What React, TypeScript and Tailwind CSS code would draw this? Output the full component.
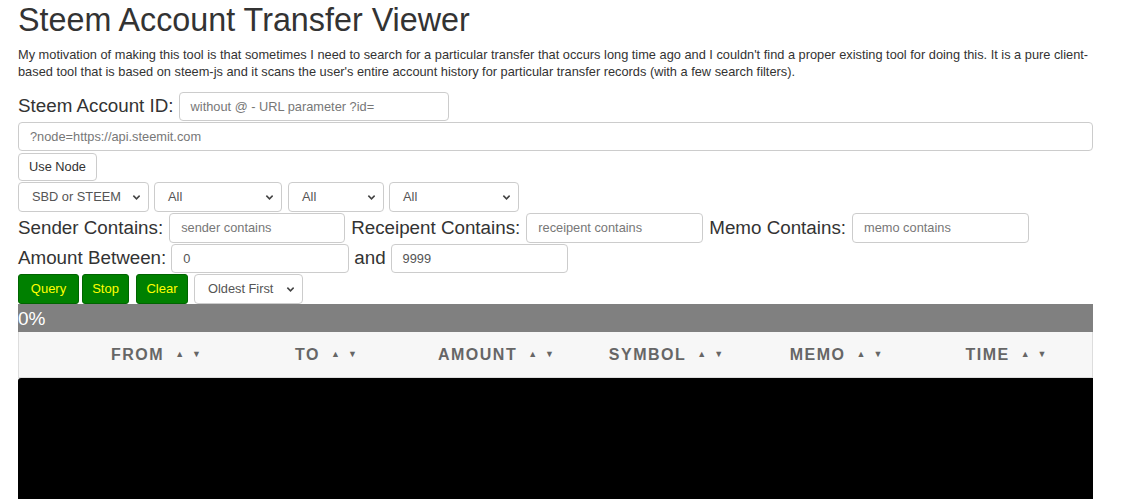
import React from "react";

const columns = ["From", "To", "Amount", "Symbol", "Memo", "Time"];

function Chevron() {
  return (
    <svg
      className="pointer-events-none absolute right-[8px] top-1/2 -translate-y-1/2 w-[9px] h-[9px] text-[#444]"
      viewBox="0 0 10 10"
      fill="none"
      stroke="currentColor"
      strokeWidth={1.7}
    >
      <path d="M1.5 3.5 5 7l3.5-3.5" />
    </svg>
  );
}

function Select({ width, value, className = "" }: { width: string; value: string; className?: string }) {
  return (
    <div className={`relative ${width} h-[30px] ${className}`}>
      <div className="h-full w-full rounded-[4px] border border-[#ccc] bg-white pl-[13px] flex items-center text-[12.8px] text-[#555]">
        {value}
      </div>
      <Chevron />
    </div>
  );
}

function Field({ width, text, placeholder = true, height = "h-[29px]" }: { width: string; text: string; placeholder?: boolean; height?: string }) {
  return (
    <div
      className={`${width} ${height} rounded-[4px] border border-[#ccc] bg-white px-[11px] flex items-center text-[12.8px] ${
        placeholder ? "text-[#777]" : "text-[#555]"
      }`}
    >
      {text}
    </div>
  );
}

function GreenButton({ label, width, className = "" }: { label: string; width: string; className?: string }) {
  return (
    <button className={`${width} ${className} h-[30px] rounded-[3px] border border-[#006400] bg-[#008000] text-[13px] font-normal text-[#ffff00]`}>
      {label}
    </button>
  );
}

export default function App() {
  return (
    <div className="bg-white min-h-[499px] overflow-hidden font-['Liberation_Sans',Arial,sans-serif] text-[#333]">
      <div className="ml-[18px] w-[1075px]">
        {/* Title */}
        <h1 className="pt-[3px] text-[32.3px] leading-[35px] font-normal text-[#333]">
          Steem Account Transfer Viewer
        </h1>
        <p className="mt-[8px] text-[12.8px] leading-[17px] text-[#333]">
          My motivation of making this tool is that sometimes I need to search for a particular transfer that occurs long time ago and I couldn't find a proper existing tool for doing this. It is a pure client-based tool that is based on steem-js and it scans the user's entire account history for particular transfer records (with a few search filters).
        </p>

        {/* Account */}
        <div className="mt-[12px] flex items-center gap-[5px] h-[29px]">
          <span className="text-[18.8px]">Steem Account ID:</span>
          <Field width="w-[270px]" text="without @ - URL parameter ?id=" />
        </div>
        <div className="mt-[1px]">
          <Field width="w-full" text="?node=https://api.steemit.com" />
        </div>
        <div className="mt-[2px]">
          <button className="h-[28px] w-[79px] rounded-[4px] border border-[#ccc] bg-white text-[12.8px] text-[#333]">
            Use Node
          </button>
        </div>

        {/* Filters */}
        <div className="mt-[1px] flex">
          <Select width="w-[131px]" value="SBD or STEEM" />
          <Select width="w-[128px]" className="ml-[5px]" value="All" />
          <Select width="w-[96px]" className="ml-[6px]" value="All" />
          <Select width="w-[130px]" className="ml-[5px]" value="All" />
        </div>

        <div className="mt-[1px] flex items-center gap-[6px] h-[30px] text-[18.8px]">
          <span>Sender Contains:</span>
          <Field width="w-[176px]" height="h-[30px]" text="sender contains" />
          <span>Receipent Contains:</span>
          <Field width="w-[177px]" height="h-[30px]" text="receipent contains" />
          <span>Memo Contains:</span>
          <Field width="w-[177px]" height="h-[30px]" text="memo contains" />
        </div>

        <div className="mt-[1px] flex items-center gap-[5px] h-[29px] text-[18.8px]">
          <span>Amount Between:</span>
          <Field width="w-[178px]" text="0" placeholder={false} />
          <span>and</span>
          <Field width="w-[177px]" text="9999" placeholder={false} />
        </div>

        <div className="mt-[1px] flex items-center">
          <GreenButton label="Query" width="w-[61px]" />
          <GreenButton label="Stop" width="w-[47px]" className="ml-[3px]" />
          <GreenButton label="Clear" width="w-[52px]" className="ml-[7px]" />
          <Select width="w-[109px]" className="ml-[6px]" value="Oldest First" />
        </div>

        {/* Progress */}
        <div className="h-[28px] bg-[#808080] flex items-center text-[19px] text-white leading-none">
          0%
        </div>

        {/* Table header */}
        <div className="h-[46px] bg-[#f7f7f7] border-x border-b border-[#ddd] grid grid-cols-[52px_repeat(6,170px)] items-center">
          <div />
          {columns.map((c) => (
            <div key={c} className="flex items-center justify-center gap-[11px] text-[16px] font-bold uppercase tracking-[1.5px] text-[#666]">
              <span>{c}</span>
              <span className="flex gap-[8px] text-[9px] tracking-normal text-[#666]">
                <span>▲</span>
                <span>▼</span>
              </span>
            </div>
          ))}
        </div>

        {/* Results */}
        <div className="h-[200px] bg-black rounded-tl-[3px]" />
      </div>
    </div>
  );
}
